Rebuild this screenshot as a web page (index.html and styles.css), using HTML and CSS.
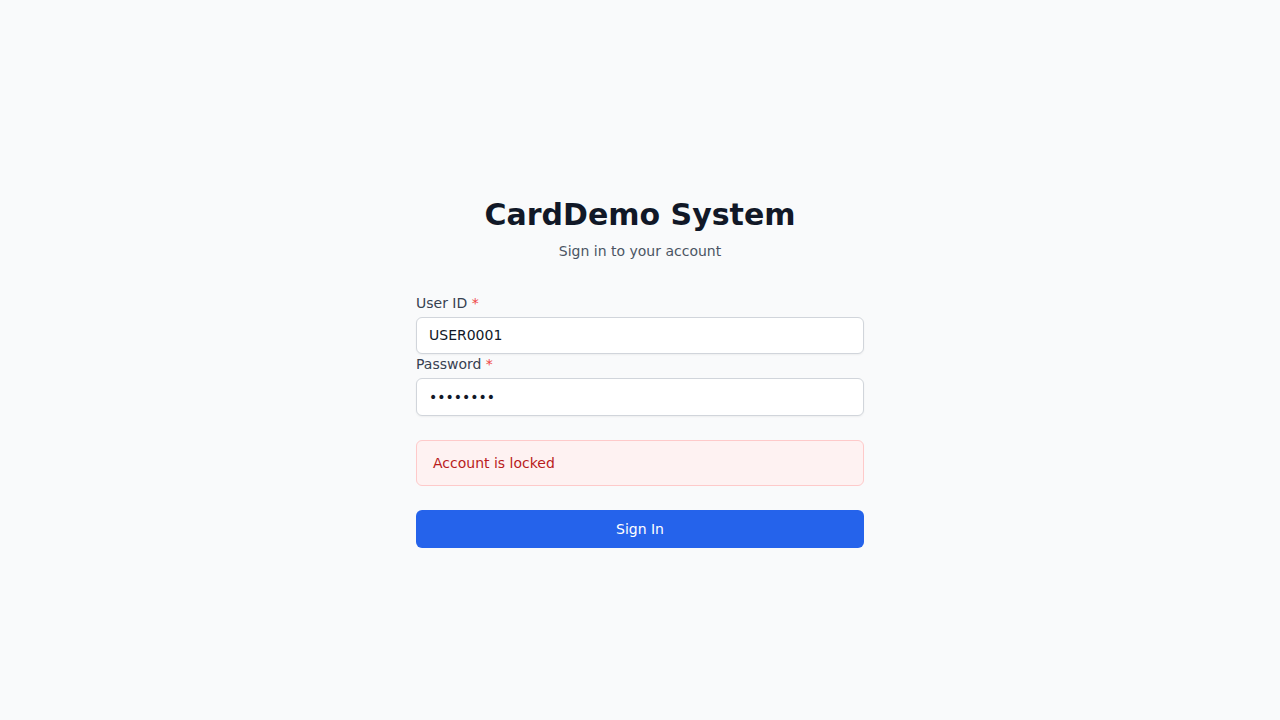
FILE: index.html
```html
<!DOCTYPE html>
<html lang="en">
<head>
<meta charset="utf-8">
<title>CardDemo System - Sign in</title>
<link rel="stylesheet" href="styles.css">
</head>
<body>
<main class="page">
  <div class="panel">
    <header class="head">
      <h1 class="title">CardDemo System</h1>
      <p class="subtitle">Sign in to your account</p>
    </header>
    <form class="form">
      <div class="fields">
        <div class="field">
          <label class="label" for="uid">User ID <span class="req">*</span></label>
          <input class="input" id="uid" type="text" value="USER0001">
        </div>
        <div class="field">
          <label class="label" for="pwd">Password <span class="req">*</span></label>
          <input class="input" id="pwd" type="password" value="password">
        </div>
      </div>
      <div class="alert">Account is locked</div>
      <button class="btn" type="button">Sign In</button>
    </form>
  </div>
</main>
</body>
</html>
```
FILE: styles.css
```css
* { box-sizing: border-box; }
html, body { margin: 0; padding: 0; }
body {
  background: #f9fafb;
  font-family: "DejaVu Sans", Verdana, sans-serif;
  color: #111827;
}
.page {
  min-height: 100vh;
  display: flex;
  align-items: center;
  justify-content: center;
  padding-top: 24px;
}
.panel {
  width: 448px;
  display: flex;
  flex-direction: column;
}
.head { text-align: center; }
.title {
  margin: 0;
  font-size: 30px;
  line-height: 36px;
  font-weight: 700;
  color: #111827;
}
.subtitle {
  margin: 8px 0 0;
  font-size: 14px;
  line-height: 20px;
  color: #4b5563;
}
.form {
  margin-top: 32px;
  display: flex;
  flex-direction: column;
  gap: 24px;
}
.fields { display: flex; flex-direction: column; }
.field { display: flex; flex-direction: column; }
.label {
  font-size: 14px;
  line-height: 20px;
  font-weight: 500;
  color: #374151;
}
.req { color: #ef4444; }
.input {
  margin-top: 4px;
  width: 100%;
  height: 37.5px;
  padding: 8px 12px;
  border: 1px solid #d1d5db;
  border-radius: 6px;
  background: #fff;
  font-family: "DejaVu Sans", Verdana, sans-serif;
  font-size: 14px;
  line-height: 20px;
  color: #111827;
  box-shadow: 0 1px 2px rgba(0,0,0,0.05);
  outline: none;
}
.alert {
  padding: 12px 16px;
  background: #fef2f2;
  border: 1px solid #fecaca;
  border-radius: 6px;
  color: #b91c1c;
  font-size: 14px;
  line-height: 20px;
}
.btn {
  height: 38px;
  width: 100%;
  border: 1px solid transparent;
  border-radius: 6px;
  background: #2563eb;
  color: #fff;
  font-family: "DejaVu Sans", Verdana, sans-serif;
  font-size: 14px;
  line-height: 20px;
  font-weight: 500;
  cursor: pointer;
}
```
